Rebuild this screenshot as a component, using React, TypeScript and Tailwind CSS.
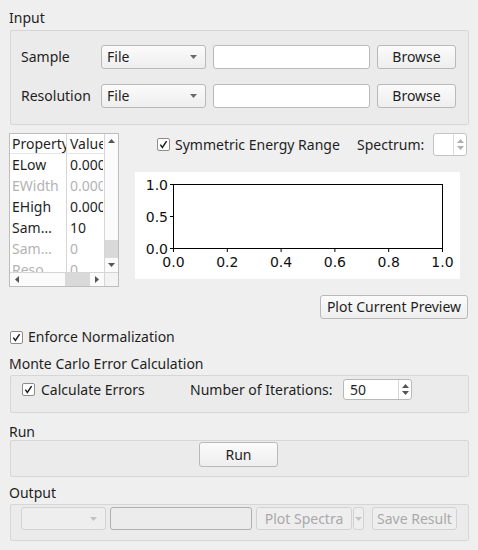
import React from "react";

const Check = () => (
  <span className="w-[13px] h-[13px] shrink-0 border border-[#8c8c8c] bg-white rounded-[2px] flex items-center justify-center">
    <svg width="9" height="9" viewBox="0 0 9 9">
      <path d="M1.3 4.6 L3.4 7.4 L7.6 1.2" stroke="#202020" strokeWidth="1.5" fill="none" />
    </svg>
  </span>
);

const Down = ({ c = "#6a6a6a" }: { c?: string }) => (
  <svg width="7" height="4" viewBox="0 0 7 4">
    <path d="M0 0 H7 L3.5 4 Z" fill={c} />
  </svg>
);
const Up = ({ c = "#6a6a6a" }: { c?: string }) => (
  <svg width="7" height="4" viewBox="0 0 7 4">
    <path d="M0 4 H7 L3.5 0 Z" fill={c} />
  </svg>
);
const Left = () => (
  <svg width="4" height="7" viewBox="0 0 4 7">
    <path d="M4 0 V7 L0 3.5 Z" fill="#555" />
  </svg>
);
const Right = () => (
  <svg width="4" height="7" viewBox="0 0 4 7">
    <path d="M0 0 V7 L4 3.5 Z" fill="#555" />
  </svg>
);

const rows: { a: string; b: string; dis: boolean }[] = [
  { a: "ELow", b: "0.000", dis: false },
  { a: "EWidth", b: "0.000", dis: true },
  { a: "EHigh", b: "0.000", dis: false },
  { a: "Sam…", b: "10", dis: false },
  { a: "Sam…", b: "0", dis: true },
  { a: "Reso…", b: "0", dis: true },
];

function Table() {
  return (
    <div className="ml-[9px] w-[110px] h-[154px] shrink-0 border border-[#bdbdbd] bg-white flex flex-col overflow-hidden">
      <div className="flex h-[138px]">
        <div className="w-[94px] h-[138px] overflow-hidden flex flex-col">
          <div className="flex h-[20px] shrink-0 border-b border-[#e6e6e6]">
            <div className="w-[57px] pl-[2px] overflow-hidden whitespace-nowrap border-r border-[#d6d6d6] leading-[19px]">Property</div>
            <div className="w-[36px] pl-[3px] overflow-hidden whitespace-nowrap leading-[19px]">Value</div>
          </div>
          {rows.map((r, i) => (
            <div key={i} className={"flex h-[21px] shrink-0 " + (r.dis ? "text-[#b3b3b3]" : "text-[#1f1f1f]")}>
              <div className="w-[57px] pl-[2px] overflow-hidden whitespace-nowrap border-r border-[#d6d6d6] leading-[21px]">{r.a}</div>
              <div className="w-[36px] pl-[3px] overflow-hidden whitespace-nowrap leading-[21px]">{r.b}</div>
            </div>
          ))}
        </div>
        <div className="w-[14px] h-[138px] border-l border-[#d6d6d6] bg-[#fbfbfb] flex flex-col">
          <div className="h-[14px] flex items-center justify-center"><Up c="#555" /></div>
          <div className="flex-1 flex flex-col justify-end">
            <div className="h-[18px] bg-[#d9d9d9]" />
          </div>
          <div className="h-[14px] flex items-center justify-center"><Down c="#555" /></div>
        </div>
      </div>
      <div className="flex h-[14px] border-t border-[#d6d6d6]">
        <div className="w-[94px] flex bg-[#fbfbfb]">
          <div className="w-[14px] flex items-center justify-center"><Left /></div>
          <div className="w-[41px]" />
          <div className="w-[25px] bg-[#d9d9d9]" />
          <div className="w-[14px] flex items-center justify-center"><Right /></div>
        </div>
        <div className="w-[14px] border-l border-[#d6d6d6] bg-[#f3f3f3]" />
      </div>
    </div>
  );
}

function Plot() {
  const xs = [0, 0.2, 0.4, 0.6, 0.8, 1.0];
  const x0 = 38.5, x1 = 307.5, y0 = 12.5, y1 = 76.5;
  return (
    <svg width="325" height="107" viewBox="0 0 325 107" className="bg-white block">
      <rect x={x0} y={y0} width={x1 - x0} height={y1 - y0} fill="white" stroke="black" strokeWidth="1" />
      {[1.0, 0.5, 0.0].map((v, i) => {
        const y = y0 + (i * (y1 - y0)) / 2;
        return (
          <g key={v}>
            <line x1={x0 - 3.5} x2={x0} y1={y} y2={y} stroke="black" strokeWidth="1" />
            <text x={33} y={y + 5} textAnchor="end" fontFamily="DejaVu Sans, sans-serif" fontSize="14" fill="#111">
              {v.toFixed(1)}
            </text>
          </g>
        );
      })}
      {xs.map((v) => {
        const x = x0 + v * (x1 - x0);
        return (
          <g key={v}>
            <line x1={x} x2={x} y1={y1} y2={y1 + 3.5} stroke="black" strokeWidth="1" />
            <text x={x} y={95} textAnchor="middle" fontFamily="DejaVu Sans, sans-serif" fontSize="14" fill="#111">
              {v.toFixed(1)}
            </text>
          </g>
        );
      })}
    </svg>
  );
}

const btn = "border border-[#b9b9b9] rounded-[3px] bg-linear-to-b from-[#fbfbfb] to-[#eeeeee] flex items-center justify-center whitespace-nowrap";
const dbtn = "border border-[#d2d2d2] rounded-[3px] bg-[#eeeeee] text-[#a9a9a9] flex items-center justify-center whitespace-nowrap";

export default function App() {
  return (
    <div className="w-[478px] h-[550px] overflow-hidden bg-[#efefef] text-[14px] leading-[16px] text-[#1f1f1f] font-['Noto_Sans',sans-serif] flex flex-col">
      {/* Input */}
      <div className="mt-[10px] ml-[9px] h-[16px]">Input</div>
      <div className="mt-[4px] ml-[10px] w-[459px] h-[95px] border border-[#d6d6d6] rounded-[2px] bg-[#ebebeb] pt-[14px] pl-[10px] flex flex-col gap-[15px]">
        {["Sample", "Resolution"].map((l) => (
          <div key={l} className="flex items-center h-[24px]">
            <div className="w-[80px]">{l}</div>
            <div className={"w-[105px] h-[24px] pl-[5px] pr-[8px] !justify-between " + btn}>
              <span>File</span>
              <Down />
            </div>
            <div className="ml-[7px] w-[157px] h-[24px] bg-white border border-[#b9b9b9] rounded-[3px]" />
            <div className={"ml-[7px] w-[79px] h-[24px] " + btn}>Browse</div>
          </div>
        ))}
      </div>

      {/* Middle */}
      <div className="mt-[8px] flex">
        <Table />
        <div className="ml-[16px] w-[333px] flex flex-col">
          <div className="h-[23px] flex items-center pl-[22px]">
            <Check />
            <div className="ml-[5px] w-[182px] whitespace-nowrap">Symmetric Energy Range</div>
            <div className="w-[76px] whitespace-nowrap">Spectrum:</div>
            <div className="w-[34px] h-[23px] flex bg-white border border-[#c3c3c3] rounded-[3px]">
              <div className="flex-1" />
              <div className="w-[13px] border-l border-[#dcdcdc] flex flex-col items-center justify-center gap-[3px]">
                <Up c="#b0b0b0" />
                <Down c="#b0b0b0" />
              </div>
            </div>
          </div>
          <div className="mt-[16px]">
            <Plot />
          </div>
          <div className="mt-[16px] flex justify-end">
            <div className={"w-[148px] h-[24px] " + btn}>Plot Current Preview</div>
          </div>
        </div>
      </div>

      {/* Enforce */}
      <div className="mt-[9px] ml-[10px] h-[18px] flex items-center">
        <Check />
        <span className="ml-[5px]">Enforce Normalization</span>
      </div>

      {/* Monte Carlo */}
      <div className="mt-[10px] ml-[9px] h-[16px]">Monte Carlo Error Calculation</div>
      <div className="mt-[3px] ml-[10px] w-[459px] h-[38px] border border-[#d6d6d6] rounded-[2px] bg-[#ebebeb] pt-[3px] pl-[11px] flex items-start">
        <div className="w-[168px] h-[21px] flex items-center">
          <Check />
          <span className="ml-[6px]">Calculate Errors</span>
        </div>
        <div className="w-[153px] h-[21px] flex items-center whitespace-nowrap">Number of Iterations:</div>
        <div className="w-[69px] h-[21px] flex bg-white border border-[#b9b9b9] rounded-[3px]">
          <div className="flex-1 pl-[6px] flex items-center">50</div>
          <div className="w-[13px] border-l border-[#d6d6d6] flex flex-col items-center justify-center gap-[3px]">
            <Up c="#555" />
            <Down c="#555" />
          </div>
        </div>
      </div>

      {/* Run */}
      <div className="mt-[11px] ml-[9px] h-[16px]">Run</div>
      <div className="ml-[10px] w-[459px] h-[37px] border border-[#d6d6d6] rounded-[2px] bg-[#ebebeb] pt-[1px] flex justify-center">
        <div className={"w-[79px] h-[25px] -ml-[2px] " + btn}>Run</div>
      </div>

      {/* Output */}
      <div className="mt-[8px] ml-[9px] h-[16px]">Output</div>
      <div className="mt-[3px] ml-[10px] w-[459px] h-[37px] border border-[#d6d6d6] rounded-[2px] bg-[#ebebeb] pt-[2px] pl-[10px] flex items-start">
        <div className={"w-[85px] h-[23px] pr-[8px] !justify-end " + dbtn}>
          <Down c="#c2c2c2" />
        </div>
        <div className="ml-[4px] w-[142px] h-[23px] border border-[#b0b0b0] rounded-[3px] bg-[#ececec]" />
        <div className={"ml-[4px] w-[96px] h-[23px] " + dbtn}>Plot Spectra</div>
        <div className={"ml-[1px] w-[11px] h-[23px] " + dbtn}>
          <Down c="#c2c2c2" />
        </div>
        <div className={"ml-[8px] w-[85px] h-[23px] " + dbtn}>Save Result</div>
      </div>
    </div>
  );
}
